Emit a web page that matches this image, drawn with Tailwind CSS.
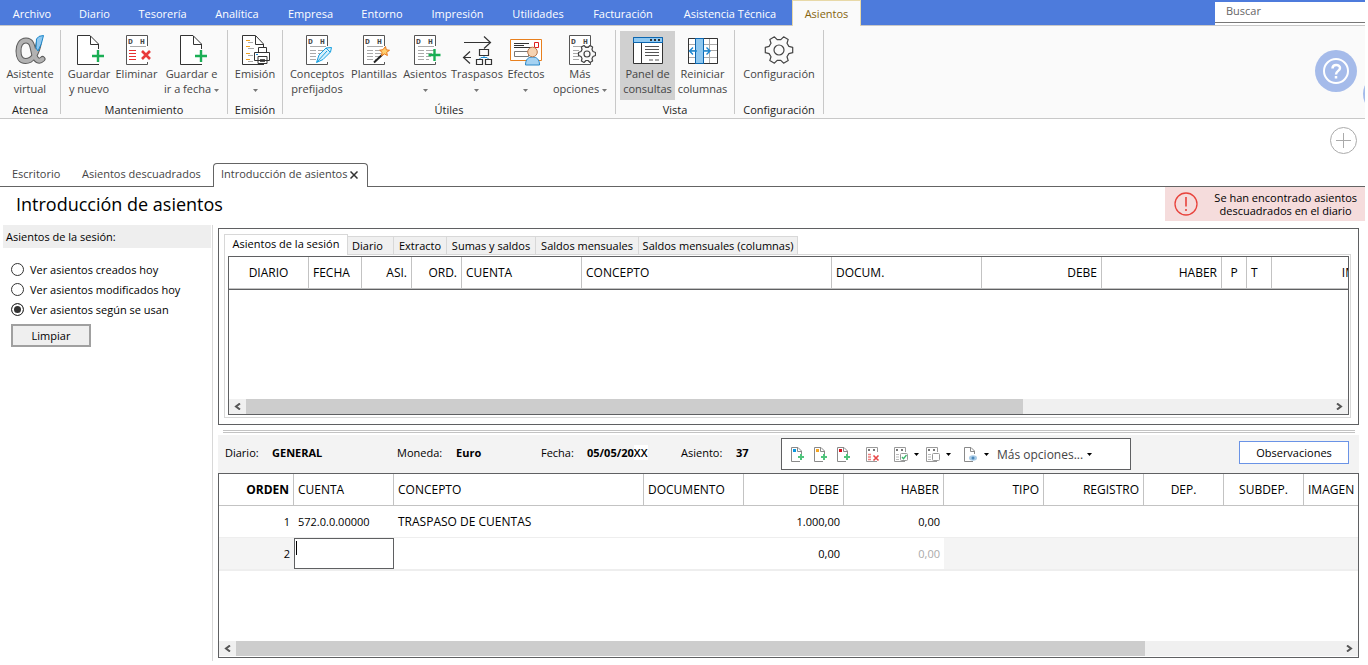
<!DOCTYPE html>
<html lang="es">
<head>
<meta charset="utf-8">
<meta name="viewport" content="width=device-width, initial-scale=1">
<title>Introducción de asientos</title>
<script src="https://cdn.jsdelivr.net/npm/@tailwindcss/browser@4"></script>
</head>
<body class="flex h-screen flex-col overflow-hidden bg-white pr-[3px] font-['Open_Sans','Noto_Sans',sans-serif] text-[11px] leading-[15px] text-black">

<svg class="hidden" aria-hidden="true">
  <symbol id="doc-plus" viewBox="0 0 32 32"><g fill="none" stroke="#333"><path fill="#fff" stroke="none" d="M5 2h12l8 8v20H5z"/><path d="M25.5 15V10L17 1.5H4.5V30.5H26"/><path d="M17.5 2V10.5H25.5"/><path stroke="#1aae54" stroke-width="2.4" d="M25 16v12M19 22h12"/></g></symbol>
  <symbol id="dh" viewBox="0 0 32 32"><path fill="#fff" d="M6 2h20v28H6z"/><path fill="none" stroke="#555" d="M26.5 12V1.5H5.5V30.5H26.5V28"/><text x="7" y="10" font-family="Liberation Mono" font-weight="700" font-size="8" fill="#444">D</text><text x="19" y="10" font-family="Liberation Mono" font-weight="700" font-size="8" fill="#444">H</text><path stroke="#aaa" d="M9 12.5H25"/></symbol>
  <symbol id="dh-lines" viewBox="0 0 32 32"><use href="#dh"/><path stroke="#aaa" d="M9 16.5h6M9 19.5h6M9 22.5h6M9 25.5h6M17 16.5h8M17 19.5h6M17 22.5h5M17 25.5h3"/></symbol>
  <symbol id="gear" viewBox="-15 -15 30 30"><path fill="#fafafa" stroke="#444" stroke-width="1.2" stroke-linejoin="round" d="M13.7-2.7V2.7L9.9 3.6 8 6.7 9.2 10.6 4.6 13.2 1.8 10.3H-1.8L-4.6 13.2-9.2 10.6-8 6.7-9.9 3.6-13.7 2.7V-2.7L-9.9-3.6-8-6.7-9.2-10.6-4.6-13.2-1.8-10.3H1.8L4.6-13.2 9.2-10.6 8-6.7 9.9-3.6Z"/><circle r="5" fill="none" stroke="#444" stroke-width="1.2"/></symbol>
  <symbol id="caret" viewBox="0 0 5 3"><path fill="currentColor" d="M0 0h5L2.5 3z"/></symbol>
  <symbol id="mini-doc" viewBox="0 0 16 16"><path fill="none" stroke="#8a8a8a" d="M11.5 8V5L8 1.5H1.5V15.5H10M7.5 1.5V5.5H11.5"/></symbol>
  <symbol id="mini-plus" viewBox="0 0 16 16"><path stroke="#4fc47c" stroke-width="2" d="M11 8v6M8 11h6"/></symbol>
  <symbol id="mini-dh" viewBox="0 0 16 16"><path fill="none" stroke="#9a9a9a" d="M12.5 6V1.5H1.5V15.5H12"/><path fill="#777" d="M3 3h2v2H3zM8 3h2v2H8z"/></symbol>
</svg>

<!-- Menu -->
<header class="relative shrink-0">
  <nav class="flex h-[26px] border-b border-[#c8c8c8] bg-[#4d7bdc] text-white">
    <a href="#" class="w-[64px] pt-[6px] text-center">Archivo</a>
    <a href="#" class="w-[61px] pt-[6px] text-center">Diario</a>
    <a href="#" class="w-[75px] pt-[6px] text-center">Tesorería</a>
    <a href="#" class="w-[74px] pt-[6px] text-center">Analítica</a>
    <a href="#" class="w-[73px] pt-[6px] text-center">Empresa</a>
    <a href="#" class="w-[70px] pt-[6px] text-center">Entorno</a>
    <a href="#" class="w-[81px] pt-[6px] text-center">Impresión</a>
    <a href="#" class="w-[80px] pt-[6px] text-center">Utilidades</a>
    <a href="#" class="w-[90px] pt-[6px] text-center">Facturación</a>
    <a href="#" class="w-[124px] pt-[6px] text-center whitespace-nowrap">Asistencia Técnica</a>
    <a href="#" class="-mb-px w-[69px] border border-b-0 border-[#e8d9a8] bg-[#fafafa] pt-[5px] text-center text-[#86640e]">Asientos</a>
    <div class="ml-auto flex w-[150px] flex-col pt-[2px]">
      <input type="text" aria-label="Buscar" placeholder="Buscar" class="h-[21px] w-full border-b border-[#777] bg-white pb-1 pl-[11px] text-[#555] outline-none placeholder:text-[#666]">
      <span class="h-[2px] bg-white"></span>
    </div>
  </nav>

  <!-- Ribbon -->
  <div class="flex h-[93px] border-b border-[#c8c8c8] bg-[#fafafa] text-center whitespace-nowrap text-[#444]">
    <section class="flex w-[60px] flex-col items-center pt-[5px]">
      <button class="flex h-[69px] w-[58px] flex-col items-center pt-[3px]">
        <svg class="size-8" viewBox="0 0 32 32"><g fill="none" stroke-linecap="round"><path stroke="#5c5c5c" stroke-width="6" d="M25 8C23 20 18 27 11.500 27 6.500 27 4.500 22.500 4.500 17S7 6.500 12 6.500C19 6.500 18.500 15 20.500 21.500 21.800 26 25 28.500 28.500 25"/><path stroke="#b2b2b2" stroke-width="4" d="M25 8C23 20 18 27 11.500 27 6.500 27 4.500 22.500 4.500 17S7 6.500 12 6.500C19 6.500 18.500 15 20.500 21.500 21.800 26 25 28.500 28.500 25"/></g><path fill="#8fc8f0" stroke="#1b86c8" d="M22 14 22.500 5Q24 1.500 29.500 1.500Q28 10 24 17Z"/></svg>
        <span>Asistente<br>virtual</span>
      </button>
      <h2 class="mt-[2px] text-[#222]">Atenea</h2>
    </section>
    <i class="mt-1 h-[84px] w-px bg-[#c8c8c8]"></i>
    <section class="flex w-[166px] flex-col items-center pt-[5px]">
      <div class="flex w-[156px]">
        <button class="flex h-[69px] w-[46px] flex-col items-center pt-[3px]"><svg class="size-8"><use href="#doc-plus"/></svg><span>Guardar<br>y nuevo</span></button>
        <button class="flex h-[69px] w-[49px] flex-col items-center pt-[3px]"><svg class="size-8" viewBox="0 0 32 32"><use href="#dh"/><path stroke="#e83030" d="M8 16.500h7M8 19.500h7M8 22.500h7M8 25.500h7"/><path stroke="#e83a3a" stroke-width="2.600" d="M21 17l8 8M29 17l-8 8"/></svg><span>Eliminar</span></button>
        <button class="flex h-[69px] w-[61px] flex-col items-center pt-[3px]"><svg class="size-8"><use href="#doc-plus"/></svg><span>Guardar e<br>ir a fecha <svg class="inline h-[3px] w-[5px] align-middle text-[#777]"><use href="#caret"/></svg></span></button>
      </div>
      <h2 class="mt-[2px] text-[#222]">Mantenimiento</h2>
    </section>
    <i class="mt-1 h-[84px] w-px bg-[#c8c8c8]"></i>
    <section class="flex w-[54px] flex-col items-center pt-[5px]">
      <button class="flex h-[69px] w-[48px] flex-col items-center pt-[3px]">
        <svg class="size-8" viewBox="0 0 32 32"><path fill="#fff" stroke="#333" d="M24.500 13V10L16.500 1.500H3.500V30.500H25M16.500 2V10.500H24.500"/><path stroke="#f0a020" d="M7 6.500h4M7 12.500h4M7 19.500h4M7 25.500h4"/><path stroke="#aaa" d="M9 8.500h5M9 14.500h6M9 21.500h5M9 27.500h5"/><path fill="#fff" stroke="#333" d="M19.500 13.500h8v5h-8zM15.500 18.500h15v8h-15zM19 22.500h9v7h-9z"/><path stroke="#555" d="M21 25.500h5M21 27.500h5"/><path stroke="#1b90d8" d="M17 20.500h2"/></svg>
        <span>Emisión<br><svg class="inline h-[3px] w-[5px] align-middle text-[#777]"><use href="#caret"/></svg></span>
      </button>
      <h2 class="mt-[2px] text-[#222]">Emisión</h2>
    </section>
    <i class="mt-1 h-[84px] w-px bg-[#c8c8c8]"></i>
    <section class="flex w-[332px] flex-col items-center pt-[5px]">
      <div class="flex w-full justify-end pr-px">
        <button class="flex h-[69px] w-[58px] flex-col items-center pt-[3px]"><svg class="size-8" viewBox="0 0 32 32"><use href="#dh-lines"/><path fill="#d8f0fc" stroke="#16a0e0" stroke-linejoin="round" d="M15.500 28.500 18 21 25 14 30.500 13.500 29.500 18 22 25.500ZM16 28 26 17M25 14l4 4"/></svg><span>Conceptos<br>prefijados</span></button>
        <button class="flex h-[69px] w-[56px] flex-col items-center pt-[3px]"><svg class="size-8" viewBox="0 0 32 32"><use href="#dh-lines"/><path stroke="#222" stroke-width="2" d="M16 28.500 25 20"/><path fill="#ffd070" stroke="#e8761a" stroke-linejoin="round" d="M27.500 12.500l.8 3.300 3.200.5-2.800 2 .7 3.200-2.900-1.600-3 1.800.6-3.300-2.400-2.200 3.200-.5z"/></svg><span>Plantillas</span></button>
        <button class="flex h-[69px] w-[46px] flex-col items-center pt-[3px]"><svg class="size-8" viewBox="0 0 32 32"><use href="#dh-lines"/><path stroke="#1aae54" stroke-width="2.400" d="M25.500 15v12M19.500 21h12"/></svg><span>Asientos<br><svg class="inline h-[3px] w-[5px] align-middle text-[#777]"><use href="#caret"/></svg></span></button>
        <button class="flex h-[69px] w-[58px] flex-col items-center pt-[3px]"><svg class="size-8" viewBox="0 0 32 32"><g fill="none" stroke="#333" stroke-width="1.200"><path d="M3 8.500H29M23 2.500l6.500 6L23 14.500M2.500 23.500H10M9 17.500l-6.500 6L9 29.500"/><path d="M18.500 15.500h9v6h-9zM15.500 25.500h6v5h-6zM24.500 25.500h6v5h-6z"/></g><path fill="none" stroke="#1b90d8" d="M18.500 25L20 23.500H26L27.500 25M23 22v1.500"/></svg><span>Traspasos<br><svg class="inline h-[3px] w-[5px] align-middle text-[#777]"><use href="#caret"/></svg></span></button>
        <button class="flex h-[69px] w-[40px] flex-col items-center pt-[3px]"><svg class="size-8" viewBox="0 0 32 32"><path fill="#fff" stroke="#e8801e" d="M.5 5.500h31v21H.5z"/><path stroke="#333" d="M4 9.500h15M4 11.500h10M4 13.500h17"/><path fill="none" stroke="#e02020" d="M24.500 8.500h4v5h-4z"/><path fill="none" stroke="#777" d="M4.500 17.500h14v5h-14z"/><path fill="#a5d2f2" stroke="#2a88c8" d="M15.500 31c0-6 3-8 7-8s7 2 7 8z"/><circle cx="22.500" cy="18" r="4.800" fill="#f6d3b2" stroke="#b8764a"/></svg><span>Efectos<br><svg class="inline h-[3px] w-[5px] align-middle text-[#777]"><use href="#caret"/></svg></span></button>
        <button class="flex h-[69px] w-[68px] flex-col items-center pt-[3px]"><svg class="size-8" viewBox="0 0 32 32"><use href="#dh-lines"/><path fill="#fafafa" stroke="#444" stroke-width="1.200" stroke-linejoin="round" d="M31.500 18.500v3l-2.500 1-1 2 .6 2.500-2.600 1.500-2-2h-2l-2 2-2.600-1.500.6-2.500-1-2-2.500-1v-3l2.500-1 1-2-.6-2.500 2.600-1.500 2 2h2l2-2 2.600 1.500-.6 2.500 1 2z"/><circle cx="23" cy="20" r="3" fill="none" stroke="#444" stroke-width="1.200"/></svg><span>Más<br>opciones <svg class="inline h-[3px] w-[5px] align-middle text-[#777]"><use href="#caret"/></svg></span></button>
      </div>
      <h2 class="mt-[2px] text-[#222]">Útiles</h2>
    </section>
    <i class="mt-1 h-[84px] w-px bg-[#c8c8c8]"></i>
    <section class="flex w-[118px] flex-col items-center pt-[5px]">
      <div class="flex">
        <button class="flex h-[69px] w-[55px] flex-col items-center bg-[#d0d0d0] pt-[3px]"><svg class="size-8" viewBox="0 0 32 32"><path fill="#fff" stroke="#333" d="M1.500 3.500h29v26h-29z"/><path fill="#8fc8f0" stroke="#0b66b0" d="M1.500 3.500h29v5h-29z"/><path fill="#333" d="M18 5h2v2h-2zM22 5h2v2h-2zM26 5h2v2h-2z"/><path stroke="#333" d="M9.500 9V29"/><path stroke="#555" d="M13 12.500h14M13 15.500h14M13 18.500h14M13 21.500h14M17 26h4M23 26h4"/></svg><span>Panel de<br>consultas</span></button>
        <button class="flex h-[69px] w-[55px] flex-col items-center pt-[3px]"><svg class="size-8" viewBox="0 0 32 32"><path fill="#fff" stroke="#aaa" d="M1.500 4.500h29v25h-29zM1.500 10.500h29M1.500 16.500h29M1.500 23.500h29M22.500 4.500v25"/><path fill="none" stroke="#333" d="M1.500 4.500h29v25h-29z"/><path fill="#8fc8f0" stroke="#0b66b0" d="M8.500 4.500h8v25h-8z"/><path fill="none" stroke="#1b86d0" stroke-width="1.400" d="M10 17H2.500M6 13.500L2.500 17 6 20.500M16 17h7M19.500 13.500 23 17l-3.500 3.500"/></svg><span>Reiniciar<br>columnas</span></button>
      </div>
      <h2 class="mt-[2px] text-[#222]">Vista</h2>
    </section>
    <i class="mt-1 h-[84px] w-px bg-[#c8c8c8]"></i>
    <section class="flex w-[88px] flex-col items-center pt-[5px]">
      <button class="flex h-[69px] w-[80px] flex-col items-center pt-[3px]"><svg class="size-8 p-px"><use href="#gear"/></svg><span>Configuración</span></button>
      <h2 class="mt-[2px] text-[#222]">Configuración</h2>
    </section>
    <i class="mt-1 h-[84px] w-px bg-[#c8c8c8]"></i>
    <div class="ml-auto flex w-[50px] overflow-hidden pt-6">
      <button aria-label="Ayuda" class="size-[42px] shrink-0 rounded-full bg-[#a5bbea]"><svg viewBox="0 0 42 42" fill="none" stroke="#fff"><circle cx="21" cy="21" r="12" stroke-width="2"/><path stroke-width="2.500" d="M17.500 18.500c0-4.500 7.500-4.500 7.500-.5 0 3-4 2.800-4 6.500"/><path stroke-width="2.500" d="M21 26v2.500"/></svg></button>
      <span class="mt-6 ml-[6px] size-10 shrink-0 rounded-full bg-[#a5bbea]"></span>
    </div>
  </div>
</header>

<!-- Document tabs -->
<div class="flex h-[68px] shrink-0 flex-col justify-between">
  <button aria-label="Nueva pestaña" class="mt-2 mr-[8px] size-[27px] self-end"><svg viewBox="0 0 27 27" fill="none" stroke="#aaa"><circle cx="13.500" cy="13.500" r="13"/><path d="M13.500 6v15M6 13.500h15"/></svg></button>
  <div class="flex h-6 items-end text-[#444]">
    <div class="flex h-6 w-[213px] border-b border-[#646464] pt-[3px] pl-3">
      <a href="#" class="w-[70px]">Escritorio</a><a href="#" class="whitespace-nowrap">Asientos descuadrados</a>
    </div>
    <div class="flex h-6 w-[155px] justify-between rounded-t border border-b-0 border-[#646464] pt-[2px] pr-[9px] pl-[7px] whitespace-nowrap">
      <a href="#">Introducción de asientos</a>
      <button aria-label="Cerrar" class="mt-[5px] self-start"><svg class="block size-2" viewBox="0 0 8 8" stroke="#333" stroke-width="1.500"><path d="M.5.5l7 7M7.500.5l-7 7"/></svg></button>
    </div>
    <div class="h-6 grow border-b border-[#646464]"></div>
  </div>
</div>

<div class="flex h-[38px] shrink-0 justify-between">
  <h1 class="pt-1 pl-4 text-[18px] leading-[26px]">Introducción de asientos</h1>
  <div role="alert" class="flex h-[34px] w-[200px] items-center justify-between bg-[#f5dcdc] pr-2 pl-[9px] text-center leading-[13px]">
    <svg class="size-6" viewBox="0 0 24 24" fill="none" stroke="#e8433c"><circle cx="12" cy="12" r="11" stroke-width="1.300"/><path stroke-width="1.600" d="M12 5v9.500M12 17v2"/></svg>
    <span>Se han encontrado asientos<br>descuadrados en el diario</span>
  </div>
</div>

<div class="flex min-h-0 grow pb-1">
  <!-- Session filter -->
  <aside class="flex w-[213px] shrink-0 flex-col border-r border-[#d8d8d8] pl-[3px]">
    <h2 class="mr-px h-[23px] bg-[#eee] pt-1 pl-[3px]">Asientos de la sesión:</h2>
    <form class="flex flex-col gap-[5px] pt-[14px] pl-2">
      <label class="flex items-center gap-[6px]"><input type="radio" name="ver" class="size-[13px] appearance-none rounded-full border border-[#333] checked:bg-[#333] checked:shadow-[inset_0_0_0_2px_white]">Ver asientos creados hoy</label>
      <label class="flex items-center gap-[6px]"><input type="radio" name="ver" class="size-[13px] appearance-none rounded-full border border-[#333] checked:bg-[#333] checked:shadow-[inset_0_0_0_2px_white]">Ver asientos modificados hoy</label>
      <label class="flex items-center gap-[6px]"><input type="radio" name="ver" checked class="size-[13px] appearance-none rounded-full border border-[#333] checked:bg-[#333] checked:shadow-[inset_0_0_0_2px_white]">Ver asientos según se usan</label>
      <button type="button" class="mt-[2px] h-[23px] w-20 border-2 border-[#a0a0a0] bg-[#efefef]">Limpiar</button>
    </form>
  </aside>

  <main class="ml-[5px] mr-[6px] flex min-w-0 grow flex-col pt-[3px]">
    <!-- Query panel -->
    <section class="flex h-[197px] shrink-0 flex-col border border-[#5f6062] px-[5px] pt-[5px] pb-[6px]">
      <div class="flex h-5 items-end whitespace-nowrap">
        <button class="z-10 -mb-px h-[21px] w-[124px] border border-b-0 border-[#d8d8d8] bg-white pb-[3px]">Asientos de la sesión</button>
        <button class="h-[18px] w-[46px] border-t border-r border-[#d8d8d8] bg-[#f0f0f0] pr-[6px]">Diario</button>
        <button class="h-[18px] w-[53px] border-t border-r border-[#d8d8d8] bg-[#f0f0f0]">Extracto</button>
        <button class="h-[18px] w-[89px] border-t border-r border-[#d8d8d8] bg-[#f0f0f0]">Sumas y saldos</button>
        <button class="h-[18px] w-[103px] border-t border-r border-[#d8d8d8] bg-[#f0f0f0]">Saldos mensuales</button>
        <button class="h-[18px] w-[159px] border-t border-r border-[#d8d8d8] bg-[#f0f0f0]">Saldos mensuales (columnas)</button>
      </div>
      <div class="mr-[2px] flex grow flex-col border border-[#d8d8d8] pt-px pr-px pb-[2px] pl-[3px]">
        <div class="flex grow flex-col overflow-hidden border border-[#5f6062]">
          <table class="w-[1164px] table-fixed border-separate border-spacing-0 text-[12px]">
            <colgroup><col class="w-[80px]"><col class="w-[53px]"><col class="w-[50px]"><col class="w-[50px]"><col class="w-[120px]"><col class="w-[250px]"><col class="w-[150px]"><col class="w-[120px]"><col class="w-[120px]"><col class="w-[25px]"><col class="w-[25px]"><col></colgroup>
            <thead><tr class="h-8 *:border-r *:border-b *:border-[#c3c3c3] *:px-1 *:font-normal">
              <th>DIARIO</th><th class="text-left">FECHA</th><th class="text-right">ASI.</th><th class="text-right">ORD.</th><th class="text-left">CUENTA</th><th class="text-left">CONCEPTO</th><th class="text-left">DOCUM.</th><th class="text-right">DEBE</th><th class="text-right">HABER</th><th>P</th><th class="text-left">T</th><th class="text-right">IMAGEN</th>
            </tr></thead>
          </table>
          <div class="h-px bg-[#5f6062]"></div>
          <div class="mt-auto flex h-[15px] bg-[#f0f0f0]">
            <button aria-label="Desplazar a la izquierda" class="flex w-[17px] items-center justify-center"><svg class="size-[7px]" viewBox="0 0 7 7" fill="none" stroke="#555" stroke-width="2"><path d="M6 .5l-4 3 4 3"/></svg></button>
            <span class="grow-[777] bg-[#cdcdcd]"></span><span class="grow-[308]"></span>
            <button aria-label="Desplazar a la derecha" class="flex w-[17px] items-center justify-center"><svg class="size-[7px]" viewBox="0 0 7 7" fill="none" stroke="#555" stroke-width="2"><path d="M1 .5l4 3-4 3"/></svg></button>
          </div>
        </div>
      </div>
    </section>
    <div class="mt-[5px] mr-1 ml-[5px] h-[3px] shrink-0 border-y border-[#c3c3c3]"></div>

    <!-- Entry header -->
    <div class="mt-[2px] flex h-[38px] shrink-0 items-start bg-[#f3f3f3] pl-[7px] whitespace-nowrap">
      <dl class="mt-[10px] flex w-[556px] shrink-0">
        <div class="flex w-[172px]"><dt class="w-[47px]">Diario:</dt><dd class="font-bold">GENERAL</dd></div>
        <div class="flex w-[144px]"><dt class="w-[59px]">Moneda:</dt><dd class="font-bold">Euro</dd></div>
        <div class="flex w-[140px]"><dt class="w-[46px]">Fecha:</dt><dd class="font-bold">05/05/20<span class="bg-white font-semibold">XX</span></dd></div>
        <div class="flex"><dt class="w-[55px]">Asiento:</dt><dd class="font-bold">37</dd></div>
      </dl>
      <div role="toolbar" class="mt-[3px] flex h-8 w-[350px] shrink-0 items-center border border-[#5f6062] bg-white pl-2">
        <button aria-label="Nuevo apunte azul"><svg class="size-4" viewBox="0 0 16 16"><use href="#mini-doc"/><path fill="#0a96e0" d="M3 3h3v3H3z"/><use href="#mini-plus"/></svg></button>
        <button aria-label="Nuevo apunte amarillo" class="ml-[7px]"><svg class="size-4" viewBox="0 0 16 16"><use href="#mini-doc"/><path fill="#f5a623" d="M3 3h3v3H3z"/><use href="#mini-plus"/></svg></button>
        <button aria-label="Nuevo apunte rojo" class="ml-[7px]"><svg class="size-4" viewBox="0 0 16 16"><use href="#mini-doc"/><path fill="#d8101c" d="M3 3h3v3H3z"/><use href="#mini-plus"/></svg></button>
        <button aria-label="Eliminar apunte" class="ml-[13px]"><svg class="size-4" viewBox="0 0 16 16"><use href="#mini-dh"/><path stroke="#f08080" stroke-width="1.500" d="M3 8.500h3M3 11h3M3 13.500h3"/><path stroke="#e84848" stroke-width="1.600" d="M8.500 9.500l5 5M13.500 9.500l-5 5"/></svg></button>
        <button aria-label="Marcar" class="ml-3 flex items-center gap-[5px]"><svg class="size-4" viewBox="0 0 16 16"><use href="#mini-dh"/><path stroke="#bbb" d="M3 8.500h3M3 11h3M3 13.500h3"/><rect x="7.500" y="7.500" width="7" height="7" rx="1" fill="#fff" stroke="#999"/><path fill="none" stroke="#3cb86c" stroke-width="1.300" d="M9 11l1.500 1.700L13.500 9"/></svg><svg class="h-[3px] w-[5px]"><use href="#caret"/></svg></button>
        <button aria-label="Desmarcar" class="ml-[6px] flex items-center gap-[5px]"><svg class="size-4" viewBox="0 0 16 16"><use href="#mini-dh"/><path stroke="#bbb" d="M3 8.500h3M3 11h3M3 13.500h3"/><rect x="7.500" y="7.500" width="7" height="7" rx="1" fill="#fff" stroke="#999"/></svg><svg class="h-[3px] w-[5px]"><use href="#caret"/></svg></button>
        <button aria-label="Ver documento" class="ml-3 flex items-center gap-[5px]"><svg class="size-4" viewBox="0 0 16 16"><use href="#mini-doc"/><ellipse cx="10" cy="12" rx="4" ry="2.800" fill="#a8cbe6"/><circle cx="10" cy="12" r="1.500" fill="#4a86b8"/></svg><svg class="h-[3px] w-[5px]"><use href="#caret"/></svg></button>
        <button class="ml-2 flex items-center gap-1 text-[12px] text-[#444]">Más opciones...<svg class="h-[3px] w-[5px] text-black"><use href="#caret"/></svg></button>
      </div>
      <button class="mt-[6px] mr-[10px] ml-auto h-[23px] w-[110px] border border-[#6a93e6] bg-white">Observaciones</button>
    </div>

    <!-- Entry lines -->
    <section class="flex h-[185px] shrink-0 flex-col overflow-hidden border border-[#5f6062]">
      <table class="w-full min-w-[1139px] table-fixed border-separate border-spacing-0 text-[12px]">
        <colgroup><col class="w-[75px]"><col class="w-[100px]"><col class="w-[250px]"><col class="w-[100px]"><col class="w-[100px]"><col class="w-[100px]"><col class="w-[100px]"><col class="w-[100px]"><col class="w-[80px]"><col class="w-[80px]"><col></colgroup>
        <thead><tr class="h-8 *:border-r *:border-b *:border-[#c3c3c3] *:px-1 *:font-normal">
          <th class="text-right !font-bold">ORDEN</th><th class="text-left">CUENTA</th><th class="text-left">CONCEPTO</th><th class="text-left">DOCUMENTO</th><th class="text-right">DEBE</th><th class="text-right">HABER</th><th class="text-right">TIPO</th><th class="text-right">REGISTRO</th><th>DEP.</th><th>SUBDEP.</th><th class="!border-r-0 text-left">IMAGEN</th>
        </tr></thead>
        <tbody>
          <tr class="h-8 *:border-b *:border-[#eee] *:px-1 *:py-0"><td class="text-right text-[11px]">1</td><td class="text-[11px]">572.0.0.00000</td><td>TRASPASO DE CUENTAS</td><td></td><td class="text-right text-[11px]">1.000,00</td><td class="text-right text-[11px]">0,00</td><td></td><td></td><td></td><td></td><td></td></tr>
          <tr class="h-[33px] *:border-b-2 *:border-[#eee] *:py-0"><td class="bg-[#f4f4f4] px-1 text-right text-[11px]">2</td><td><div class="relative"><input type="text" aria-label="Cuenta" class="block h-[31px] w-full border border-[#5f6062] bg-white px-[2px] outline-none"><i class="absolute top-[3px] left-[2px] h-[14px] w-px bg-black"></i></div></td><td></td><td></td><td class="px-1 text-right text-[11px]">0,00</td><td class="px-1 text-right text-[11px] text-[#aaa]">0,00</td><td class="bg-[#f4f4f4]"></td><td class="bg-[#f4f4f4]"></td><td class="bg-[#f4f4f4]"></td><td class="bg-[#f4f4f4]"></td><td class="bg-[#f4f4f4]"></td></tr>
        </tbody>
      </table>
      <div class="mt-auto mb-px flex h-[15px] bg-[#f0f0f0]">
        <button aria-label="Desplazar a la izquierda" class="flex w-[17px] items-center justify-center"><svg class="size-[7px]" viewBox="0 0 7 7" fill="none" stroke="#555" stroke-width="2"><path d="M6 .5l-4 3 4 3"/></svg></button>
        <span class="grow-[909] bg-[#cdcdcd]"></span><span class="grow-[196]"></span>
        <button aria-label="Desplazar a la derecha" class="flex w-[17px] items-center justify-center"><svg class="size-[7px]" viewBox="0 0 7 7" fill="none" stroke="#555" stroke-width="2"><path d="M1 .5l4 3-4 3"/></svg></button>
      </div>
    </section>
  </main>
</div>
</body>
</html>
